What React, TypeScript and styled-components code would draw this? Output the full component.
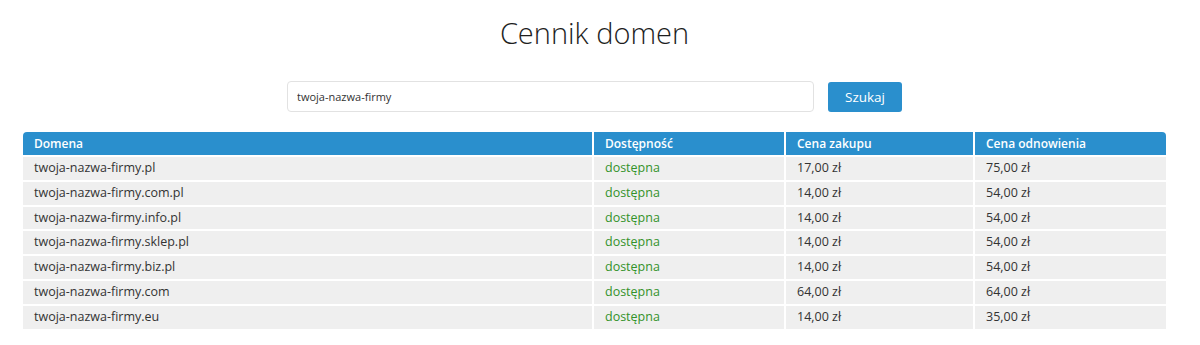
import styled, { createGlobalStyle } from "styled-components";

const GlobalStyle = createGlobalStyle`
  html, body {
    margin: 0;
    padding: 0;
    background: #fff;
  }
  body {
    font-family: "Open Sans", "Noto Sans", sans-serif;
    color: #333;
  }
`;

const COLUMNS = "569px 190px 187px 1fr";

const domains = [
  { name: "twoja-nazwa-firmy.pl", buy: "17,00 zł", renew: "75,00 zł" },
  { name: "twoja-nazwa-firmy.com.pl", buy: "14,00 zł", renew: "54,00 zł" },
  { name: "twoja-nazwa-firmy.info.pl", buy: "14,00 zł", renew: "54,00 zł" },
  { name: "twoja-nazwa-firmy.sklep.pl", buy: "14,00 zł", renew: "54,00 zł" },
  { name: "twoja-nazwa-firmy.biz.pl", buy: "14,00 zł", renew: "54,00 zł" },
  { name: "twoja-nazwa-firmy.com", buy: "64,00 zł", renew: "64,00 zł" },
  { name: "twoja-nazwa-firmy.eu", buy: "14,00 zł", renew: "35,00 zł" },
];

export default function App() {
  return (
    <>
      <GlobalStyle />
      <Page>
        <Title>Cennik domen</Title>
        <SearchForm onSubmit={(e) => e.preventDefault()}>
          <SearchInput defaultValue="twoja-nazwa-firmy" />
          <SearchButton type="submit">Szukaj</SearchButton>
        </SearchForm>
        <Table>
          <HeadRow>
            <HeadCell $first>Domena</HeadCell>
            <HeadCell>Dostępność</HeadCell>
            <HeadCell>Cena zakupu</HeadCell>
            <HeadCell $last>Cena odnowienia</HeadCell>
          </HeadRow>
          {domains.map((d) => (
            <Row key={d.name}>
              <Cell>{d.name}</Cell>
              <Cell $available>dostępna</Cell>
              <Cell>{d.buy}</Cell>
              <Cell>{d.renew}</Cell>
            </Row>
          ))}
        </Table>
      </Page>
    </>
  );
}

const Page = styled.div`
  padding: 0 34px 0 23px;
  display: flex;
  flex-direction: column;
  align-items: stretch;
`;

const Title = styled.h1`
  margin: 14px 0 0;
  text-align: center;
  font-size: 29px;
  line-height: 38px;
  font-weight: 300;
  color: #1e1e1e;
`;

const SearchForm = styled.form`
  display: flex;
  justify-content: center;
  align-items: center;
  gap: 14px;
  margin-top: 29px;
`;

const SearchInput = styled.input`
  box-sizing: border-box;
  width: 527px;
  height: 31px;
  padding: 0 9px;
  border: 1px solid #e2e2e2;
  border-radius: 4px;
  font-family: inherit;
  font-size: 11px;
  color: #333;
  outline: none;
`;

const SearchButton = styled.button`
  box-sizing: border-box;
  width: 74px;
  height: 30px;
  border: none;
  border-radius: 3px;
  background: #2a8fcd;
  color: #fff;
  font-family: inherit;
  font-size: 13.5px;
  cursor: pointer;
`;

const Table = styled.div`
  margin-top: 20px;
  display: flex;
  flex-direction: column;
  gap: 2px;
`;

const HeadRow = styled.div`
  display: grid;
  grid-template-columns: ${COLUMNS};
  gap: 2px;
  height: 23px;
`;

const HeadCell = styled.div<{ $first?: boolean; $last?: boolean }>`
  background: #2a8fcd;
  color: #fff;
  font-size: 12px;
  font-weight: 600;
  line-height: 23px;
  padding-left: 11px;
  border-radius: ${(p) =>
    p.$first ? "4px 0 0 0" : p.$last ? "0 4px 0 0" : "0"};
`;

const Row = styled.div`
  display: grid;
  grid-template-columns: ${COLUMNS};
  gap: 2px;
  height: 22.8px;
`;

const Cell = styled.div<{ $available?: boolean }>`
  background: #efefef;
  color: ${(p) => (p.$available ? "#33922a" : "#333")};
  font-size: 12.5px;
  line-height: 22.8px;
  padding-left: 11px;
  white-space: nowrap;
`;
